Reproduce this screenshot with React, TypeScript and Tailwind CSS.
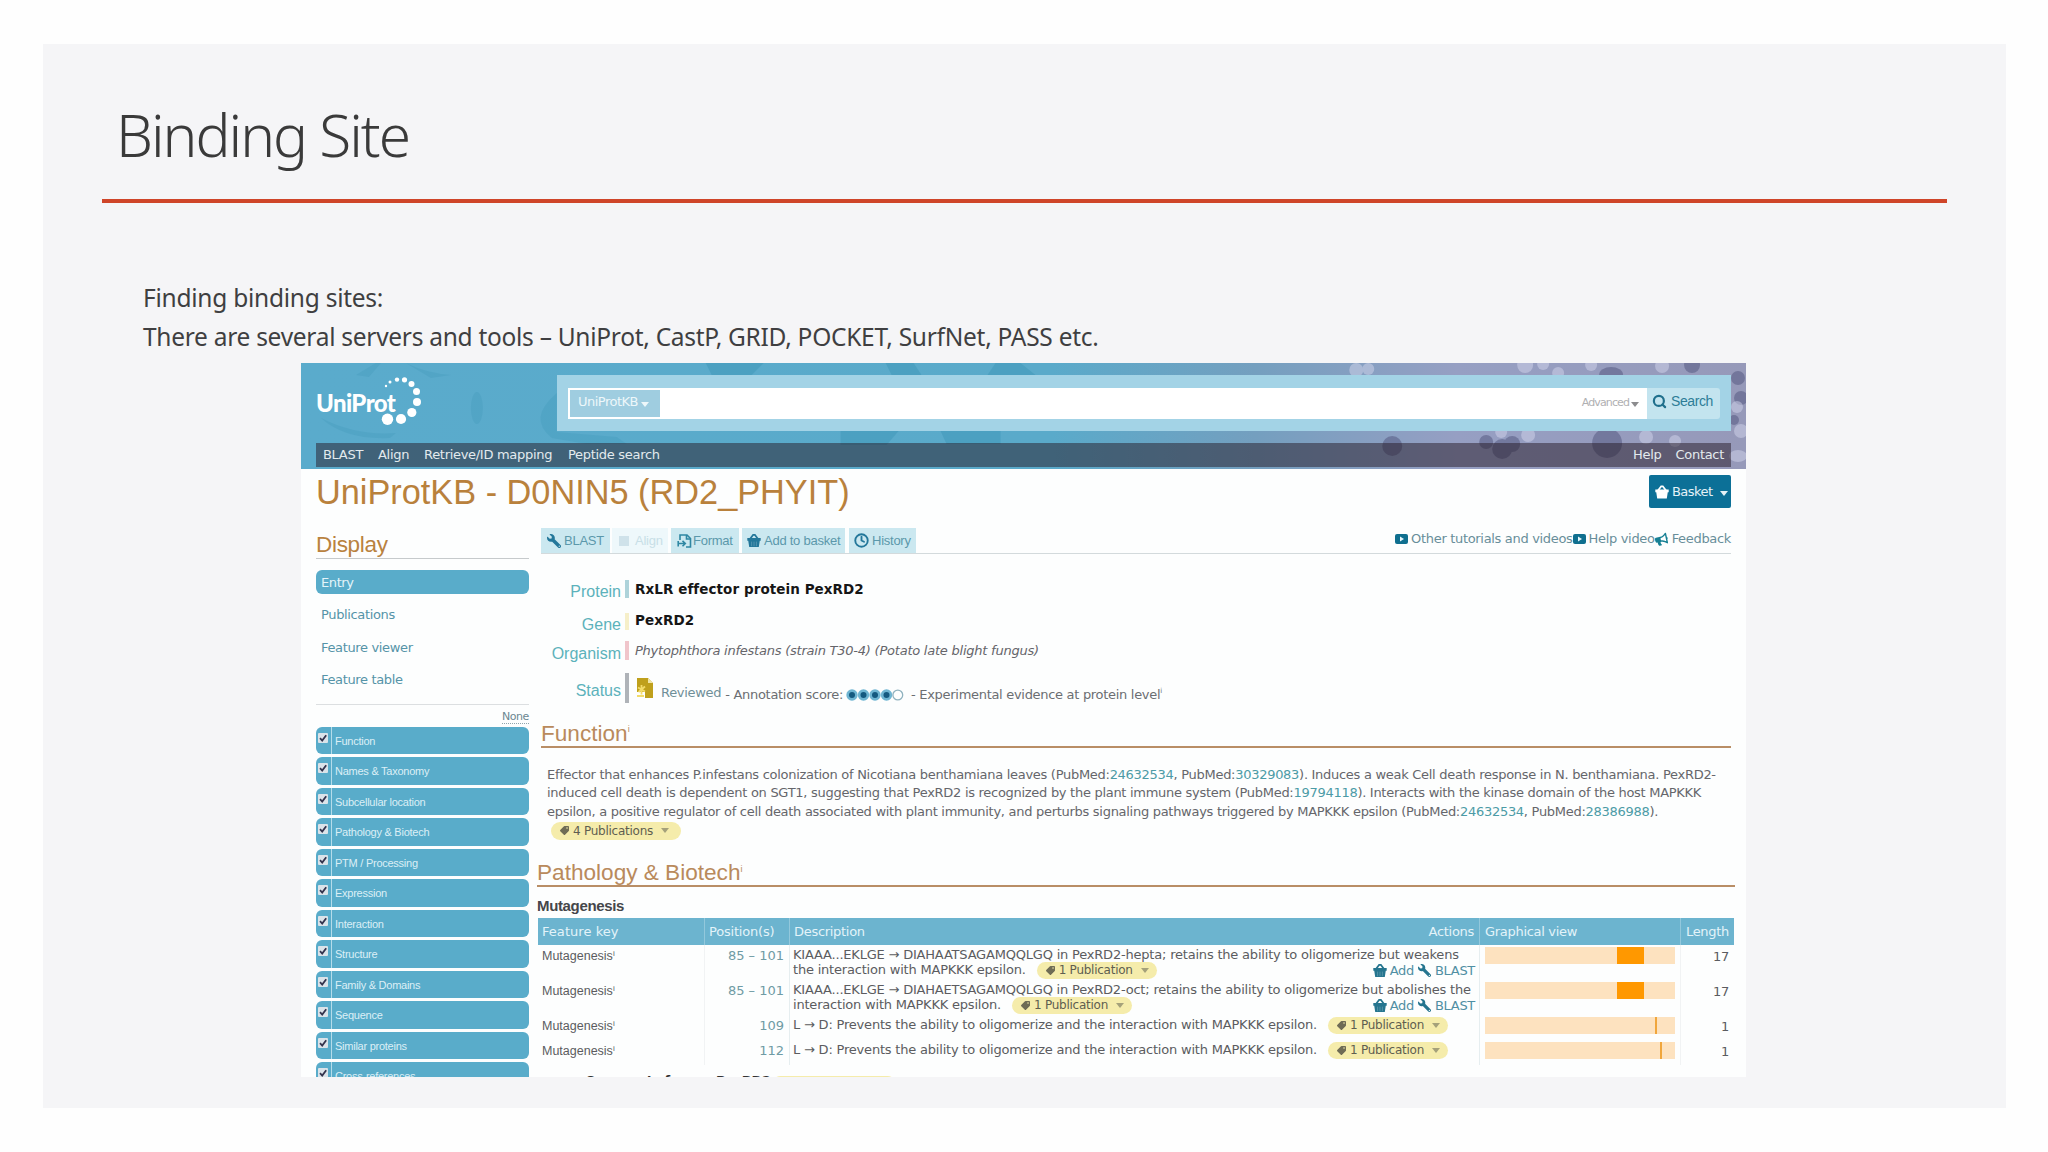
import React from "react";
import { Clock, Search } from "lucide-react";
import { FaBullhorn, FaTag, FaWrench } from "react-icons/fa";

interface Mutation {
  position: string;
  lines: string[];
  hasActions: boolean;
  length: number;
  // offset and width of the mark on the 190px track
  start: number;
  span: number;
}

const NAV_LINKS = [
  { label: "BLAST", className: "w-[55px]" },
  { label: "Align", className: "w-[46px]" },
  { label: "Retrieve/ID mapping", className: "w-[144px]" },
  { label: "Peptide search", className: "" },
];

const DISPLAY_LINKS = ["Publications", "Feature viewer", "Feature table"];

const SECTIONS = [
  "Function",
  "Names & Taxonomy",
  "Subcellular location",
  "Pathology & Biotech",
  "PTM / Processing",
  "Expression",
  "Interaction",
  "Structure",
  "Family & Domains",
  "Sequence",
  "Similar proteins",
  "Cross-references",
];

const MUTATIONS: Mutation[] = [
  {
    position: "85 – 101",
    lines: [
      "KIAAA...EKLGE → DIAHAATSAGAMQQLGQ in PexRD2-hepta; retains the ability to oligomerize but weakens",
      "the interaction with MAPKKK epsilon.",
    ],
    hasActions: true,
    length: 17,
    start: 132,
    span: 27,
  },
  {
    position: "85 – 101",
    lines: [
      "KIAAA...EKLGE → DIAHAETSAGAMQQLGQ in PexRD2-oct; retains the ability to oligomerize but abolishes the",
      "interaction with MAPKKK epsilon.",
    ],
    hasActions: true,
    length: 17,
    start: 132,
    span: 27,
  },
  {
    position: "109",
    lines: ["L → D: Prevents the ability to oligomerize and the interaction with MAPKKK epsilon."],
    hasActions: false,
    length: 1,
    start: 170,
    span: 2,
  },
  {
    position: "112",
    lines: ["L → D: Prevents the ability to oligomerize and the interaction with MAPKKK epsilon."],
    hasActions: false,
    length: 1,
    start: 175,
    span: 2,
  },
];

const LOGO_DOTS = [
  [70, 9, 1.2],
  [74, 5, 1.5],
  [81, 2.6, 2.2],
  [88.5, 2.8, 2.6],
  [95.5, 7, 3],
  [100.5, 14.5, 3.5],
  [101, 25, 4],
  [95.8, 35.5, 4.6],
  [85, 42, 5.1],
  [71.5, 42.3, 5.7],
];

const BasketIcon: React.FC<{ className?: string }> = ({ className }) => (
  <svg viewBox="0 0 14 13" className={className} fill="currentColor">
    <path d="M3 5 6.2.8h1.6L11 5" fill="none" stroke="currentColor" strokeWidth="1.8" />
    <path d="M.3 4h13.4v2.8H.3zM1.2 6.5h11.6L11.8 13H2.2z" />
    <path d="M4.6 7.6v4.6M7 7.6v4.6M9.4 7.6v4.6" stroke="white" strokeOpacity=".3" strokeWidth=".7" />
  </svg>
);

const FormatIcon = () => (
  <svg viewBox="0 0 15 14" className="h-[14px] w-[15px]" fill="none" stroke="#2f87a3" strokeWidth="1.6">
    <path d="M3 6V1h7l3.5 3.5V13H9" />
    <path d="M9.5 1v4h4M1 9.5h7M5.5 6.8 8.3 9.5l-2.8 2.8M1.2 7v5.5" />
  </svg>
);

const VideoIcon = () => (
  <svg viewBox="0 0 13 10" className="h-[10px] w-[13px] shrink-0">
    <rect width="13" height="10" rx="2" fill="#0f6f8f" />
    <path d="M5 2.6v4.8L9 5z" fill="#e6f6fb" />
  </svg>
);

const ReviewedIcon = () => (
  <svg viewBox="0 0 16 20" className="h-[20px] w-[16px]">
    <path d="M0 0h11l5 5v15H8V14H0z" fill="#bfa01c" />
    <path d="M11 0v5h5z" fill="#f1e5a5" />
    <path d="M4.5 7v9.5M1 9.5l7 4M8 8.5l-6.5 5.5M0 18h7" stroke="#f3dc6a" strokeWidth="1.8" />
  </svg>
);

const Caret: React.FC<{ className?: string }> = ({ className }) => (
  <svg viewBox="0 0 8 5" className={`h-[5px] w-[8px] ${className ?? ""}`} fill="currentColor">
    <path d="M0 0h8L4 5z" />
  </svg>
);

const PublicationPill: React.FC<{ label: string; className?: string }> = ({ label, className }) => (
  <span
    className={`flex items-center rounded-full bg-[#f5ecab] pl-[9px] text-[12px] tracking-[-0.25px] whitespace-nowrap text-[#5f5e50] ${className ?? ""}`}
  >
    <FaTag className="mr-[4px] size-[9px] rotate-90 text-[#6f6c55]" />
    {label}
    <Caret className="ml-[8px] text-[#a5a17a]" />
  </span>
);

const HeaderBackdrop = () => (
  <svg className="absolute inset-0 h-full w-full" viewBox="0 0 1446 106" preserveAspectRatio="none">
    <defs>
      <linearGradient id="sky" x1="0" x2="1" y1="0" y2="0">
        <stop offset="0" stopColor="#5aabcc" />
        <stop offset=".52" stopColor="#5aaaca" />
        <stop offset=".66" stopColor="#749fbf" />
        <stop offset=".8" stopColor="#969fc3" />
        <stop offset="1" stopColor="#9699b9" />
      </linearGradient>
    </defs>
    <rect width="1446" height="106" fill="url(#sky)" />
    <g fill="#2f8bad" opacity=".18">
      <path d="M20 55q35 18 75 15l-6 5q-45 2-69-20zM105 0q20 10 45 12l-20 3zM55 12 75 0h5L68 14z" />
      <ellipse cx="176" cy="45" rx="6" ry="16" />
      <path d="M256 30q-30 25-5 45l35 6 40 0-10-7-60-5z" />
    </g>
    <g fill="#2f8bad" opacity=".3">
      <path d="M405 0h58l-12 12h-40zM585 0h28l8 12h-30zM695 0h25l15 12h-48zM540 68h58l-12 14h-46zM640 68h60v13h-54z" />
    </g>
    <g fill="#575b83" opacity=".55">
      <circle cx="1092" cy="83" r="10" />
      <circle cx="1186" cy="79" r="7" />
      <circle cx="1202" cy="86" r="10" />
      <circle cx="1212" cy="81" r="8" />
      <circle cx="1307" cy="80" r="15" />
      <ellipse cx="1311" cy="12" rx="12" ry="8" />
      <circle cx="1392" cy="2" r="8" />
      <circle cx="1441" cy="35" r="7" />
      <circle cx="1434" cy="57" r="5" />
      <circle cx="1438" cy="15" r="7" />
    </g>
    <g fill="#d2d5ec" opacity=".5">
      <circle cx="1056" cy="7" r="7" />
      <circle cx="1068" cy="6" r="6" />
      <circle cx="1225" cy="2" r="8" />
      <circle cx="1243" cy="1" r="6" />
      <circle cx="1258" cy="10" r="6" />
      <circle cx="1291" cy="2" r="6" />
      <circle cx="1362" cy="3" r="7" />
      <circle cx="1201" cy="69" r="6" />
      <circle cx="1228" cy="72" r="7" />
      <circle cx="1346" cy="74" r="7" />
      <circle cx="1375" cy="78" r="6" />
      <circle cx="1437" cy="44" r="6" />
      <circle cx="1441" cy="68" r="7" />
      <ellipse cx="1438" cy="93" rx="9" ry="6" />
    </g>
  </svg>
);

const SiteHeader = () => (
  <header className="relative h-[106px] w-full">
    <HeaderBackdrop />
    <div className="relative flex h-[80px] pl-[15px]">
      <div className="relative mt-[13px] h-[54px] w-[241px]">
        <svg className="absolute top-0 left-0 h-[50px] w-[110px]" viewBox="0 0 110 50" fill="white">
          {LOGO_DOTS.map(([cx, cy, r], i) => (
            <circle key={i} cx={cx} cy={cy + 1} r={r} />
          ))}
        </svg>
        <span className="relative block pt-[14px] font-['Lato',sans-serif] text-[24px] leading-[26px] font-black tracking-[-0.6px] text-white">
          UniProt
        </span>
      </div>
      <div className="mt-[12px] flex h-[56px] w-[1174px] items-center bg-[#a3d3e6] pl-[11px]">
        <div className="flex h-[31px] w-[1079px] bg-white p-[2px] pr-0">
          <div className="flex w-[90px] items-center bg-[#9fcde0] pb-[2px] pl-[8px] text-[13px] tracking-[-0.5px] text-[#edf7fa]">
            UniProtKB
            <Caret className="mt-[5px] ml-[3px]" />
          </div>
          <div className="flex flex-1 items-center justify-end pr-[8px] text-[11px] tracking-[-0.9px] text-[#b0b0b2]">
            Advanced
            <Caret className="mt-[2px] ml-[2px] text-[#8c8c8e]" />
          </div>
        </div>
        <div className="flex h-[31px] w-[73px] items-center rounded-r-[3px] bg-[#c3e4ef] pb-[3px] pl-[5px] font-['Liberation_Sans',sans-serif] text-[14px] tracking-[-0.4px] text-[#2d7d97]">
          <Search className="mr-[4px] size-[15px] text-[#1f6f8c]" strokeWidth={3.5} />
          Search
        </div>
      </div>
    </div>
    <nav className="relative ml-[15px] flex h-[24px] w-[1415px] items-center bg-[#251a26]/50 pl-[7px] text-[13px] tracking-[-0.3px] text-[#e3eaee]">
      {NAV_LINKS.map((link) => (
        <span key={link.label} className={`whitespace-nowrap ${link.className}`}>
          {link.label}
        </span>
      ))}
      <span className="ml-auto">Help</span>
      <span className="mr-[7px] ml-[14px]">Contact</span>
    </nav>
  </header>
);

const Sidebar = () => (
  <aside className="w-[213px] shrink-0">
    <h2 className="border-b border-[#c6cacc] pt-[18px] font-['Liberation_Sans',sans-serif] text-[22.5px] leading-[26px] text-[#b9823f]">
      Display
    </h2>
    <div className="mt-[11px] h-[24px] rounded-[6px] bg-[#59acca] pl-[5px] leading-[26px] tracking-[-0.4px] text-[#e4f4f9]">
      Entry
    </div>
    <ul className="mt-[5px]">
      {DISPLAY_LINKS.map((label) => (
        <li key={label} className="h-[32.5px] pl-[5px] leading-[32.5px] tracking-[-0.35px] text-[#5594a8]">
          {label}
        </li>
      ))}
    </ul>
    <div className="mt-[7px] h-[23px] border-t border-[#dcdfe1] text-right text-[11px] leading-[23px] tracking-[-0.4px] text-[#6b8791]">
      <span className="border-b border-dotted border-[#8fa5ad]">None</span>
    </div>
    <ul className="space-y-[3px]">
      {SECTIONS.map((label) => (
        <li key={label} className="flex h-[27.5px] rounded-[6px] bg-[#59acca]">
          <span className="w-[16px] border-r border-[#b5dcea] pt-[6px] pl-[2px]">
            <svg viewBox="0 0 10 10" className="h-[10px] w-[10px]">
              <rect width="10" height="10" rx="1" fill="#dbe3e9" />
              <path d="M2 5.2 4.2 7.5 8.2 2.2" fill="none" stroke="#33334d" strokeWidth="1.8" />
            </svg>
          </span>
          <span className="pl-[3px] font-['Liberation_Sans',sans-serif] text-[11px] leading-[28px] tracking-[-0.25px] text-[#dceff6]">
            {label}
          </span>
        </li>
      ))}
    </ul>
  </aside>
);

const Toolbar = () => (
  <div className="ml-[4px] flex h-[26px] w-[1190px] border-b border-[#d3dadc] font-['Liberation_Sans',sans-serif] tracking-[-0.25px] text-[#5b98ab]">
    <span className="mr-[2px] flex w-[69px] items-center bg-[#cbe8f0] pl-[6px]">
      <FaWrench className="mr-[3px] size-[14px] -scale-x-100 text-[#23779a]" />
      BLAST
    </span>
    <span className="mr-[3px] flex w-[56px] items-center bg-[#eef8fb] pl-[7px] text-[#c8dfe7]">
      <span className="mr-[6px] size-[10px] bg-[#cfe2ea]" />
      Align
    </span>
    <span className="mr-[3px] flex w-[68px] items-center bg-[#cbe8f0] pl-[6px]">
      <FormatIcon />
      <span className="ml-[1px]">Format</span>
    </span>
    <span className="mr-[4px] flex w-[103px] items-center bg-[#cbe8f0] pl-[5px]">
      <BasketIcon className="mr-[3px] h-[13px] w-[14px] text-[#23779a]" />
      Add to basket
    </span>
    <span className="flex w-[67px] items-center bg-[#cbe8f0] pl-[5px]">
      <Clock className="mr-[3px] size-[15px] text-[#23779a]" strokeWidth={3} />
      History
    </span>
    <div className="ml-auto flex items-center pb-[3px] font-['DejaVu_Sans',sans-serif] tracking-[-0.32px] text-[#688e9a]">
      <VideoIcon />
      <span className="ml-[3px]">Other tutorials and videos</span>
      <VideoIcon />
      <span className="ml-[3px]">Help video</span>
      <FaBullhorn className="size-[13px] -rotate-12 text-[#178094]" />
      <span className="ml-[4px]">Feedback</span>
    </div>
  </div>
);

const InfoRow: React.FC<{
  label: string;
  className: string;
  barClassName: string;
  children: React.ReactNode;
}> = ({ label, className, barClassName, children }) => (
  <div className={`flex ${className}`}>
    <span className="flex w-[84px] items-center justify-end pt-[6px] font-['Liberation_Sans',sans-serif] text-[16px] tracking-normal text-[#5cb2bb]">
      {label}
    </span>
    <span className={`mr-[6px] ml-[4px] w-[4px] ${barClassName}`} />
    {children}
  </div>
);

const AnnotationScore = () => (
  <svg viewBox="0 0 58 12" className="mx-[3px] h-[12px] w-[58px]">
    {[6, 17.5, 29, 40.5].map((cx) => (
      <g key={cx}>
        <circle cx={cx} cy="6" r="5.7" fill="#6fb5d2" />
        <circle cx={cx} cy="6" r="3" fill="#155a80" />
      </g>
    ))}
    <circle cx="51.8" cy="6" r="4.9" fill="none" stroke="#8fb2bf" strokeWidth="1.3" />
  </svg>
);

const ProteinInfo = () => (
  <div className="mt-[26px]">
    <InfoRow label="Protein" className="h-[18px]" barClassName="bg-[#aed3da]">
      <b className="text-[13.5px] leading-[19px] tracking-[0.07px] text-[#161616]">RxLR effector protein PexRD2</b>
    </InfoRow>
    <InfoRow label="Gene" className="mt-[15px] h-[17px]" barClassName="bg-[#f6efc9]">
      <b className="text-[13.5px] leading-[15px] tracking-[0.07px] text-[#161616]">PexRD2</b>
    </InfoRow>
    <InfoRow label="Organism" className="mt-[11px] h-[19px]" barClassName="bg-[#f0c5cb]">
      <i className="leading-[20px] tracking-[-0.23px] text-[#65656a]">
        Phytophthora infestans (strain T30-4) (Potato late blight fungus)
      </i>
    </InfoRow>
    <InfoRow label="Status" className="mt-[13px] h-[30px]" barClassName="bg-[#afb3b8]">
      <div className="ml-[2px] pt-[5px]">
        <ReviewedIcon />
      </div>
      <span className="ml-[8px] pt-[10px] leading-[20px] text-[#6f8f98]">Reviewed</span>
      <span className="ml-[4px] flex items-center pt-[13px] text-[#6b6e72]">
        - Annotation score:
        <AnnotationScore />
        <span className="ml-[4px]">- Experimental evidence at protein level</span>
        <sup className="text-[7px]">i</sup>
      </span>
    </InfoRow>
  </div>
);

const PubMed: React.FC<{ id: string }> = ({ id }) => (
  <>
    PubMed:<span className="text-[#4c9ba6]">{id}</span>
  </>
);

const SectionTitle: React.FC<{ title: string; className: string }> = ({ title, className }) => (
  <h2
    className={`flex border-b-[2px] border-[#b98e66] font-['Liberation_Sans',sans-serif] text-[22.6px] tracking-normal text-[#b98a5c] ${className}`}
  >
    {title}
    <span className="-mt-[4px] text-[9px]">i</span>
  </h2>
);

const MutationRow: React.FC<{ mutation: Mutation }> = ({ mutation }) => (
  <div
    className={`grid grid-cols-[167px_85px_690px_201px_54px] text-[#5b5c60] ${
      mutation.hasActions ? "h-[35px]" : "h-[25px]"
    }`}
  >
    <div className="border-r border-[#f1f3f4] pl-[4px] font-['Liberation_Sans',sans-serif] text-[12.5px] leading-[22px] tracking-normal">
      Mutagenesis<sup className="text-[8px]">i</sup>
    </div>
    <div className="border-r border-[#e6eef0] pr-[5px] text-right leading-[22px] tracking-normal text-[#6f9ba4]">
      {mutation.position}
    </div>
    <div className="border-r border-[#e6eef0] pt-[2px] pr-[4px] pl-[3px] leading-[15px] tracking-[-0.2px]">
      {mutation.lines.map((line, i) => (
        <div key={line} className="flex h-[15px] items-center whitespace-nowrap">
          {line}
          {i === mutation.lines.length - 1 && (
            <PublicationPill label="1 Publication" className="mt-[3px] ml-[11px] h-[17px] w-[120px]" />
          )}
          {i === 1 && mutation.hasActions && (
            <span className="mt-[3px] ml-auto flex items-center tracking-[-0.3px] text-[#508fa3]">
              <BasketIcon className="mr-[3px] h-[13px] w-[14px] text-[#25758f]" />
              Add
              <FaWrench className="mx-[4px] size-[13px] -scale-x-100 text-[#25758f]" />
              BLAST
            </span>
          )}
        </div>
      ))}
    </div>
    <div className="border-r border-[#f1f3f4] pt-[2px] pl-[5px]">
      <div className="flex h-[17px] w-[190px] bg-[#fde2bf]">
        <div
          className={mutation.hasActions ? "bg-[#ff9800]" : "bg-[#f0a63c]"}
          style={{ marginLeft: mutation.start, width: mutation.span }}
        />
      </div>
    </div>
    <div className="pr-[6px] text-right leading-[23px]">{mutation.length}</div>
  </div>
);

const MutagenesisTable = () => (
  <div className="w-[1197px] pl-px">
    <div className="grid h-[27px] grid-cols-[167px_85px_690px_201px_53px] bg-[#6cb4cf] leading-[27px] text-[#e3f3f9]">
      <span className="border-r border-[#93c8dc] pl-[4px] tracking-[0.05px]">Feature key</span>
      <span className="border-r border-[#93c8dc] pl-[4px] tracking-[-0.2px]">Position(s)</span>
      <span className="flex justify-between border-r border-[#93c8dc] pr-[5px] pl-[4px]">
        <span>Description</span>
        <span>Actions</span>
      </span>
      <span className="border-r border-[#93c8dc] pl-[5px]">Graphical view</span>
      <span className="pr-[5px] text-right">Length</span>
    </div>
    {MUTATIONS.map((mutation) => (
      <MutationRow key={mutation.position + mutation.lines[0]} mutation={mutation} />
    ))}
  </div>
);

const EntryContent = () => (
  <main className="ml-[8px] w-[1198px] pt-[14px]">
    <Toolbar />
    <ProteinInfo />
    <SectionTitle title="Function" className="ml-[4px] w-[1190px] pt-[18px] leading-[25px]" />
    <p className="mt-[18px] mb-px ml-[10px] leading-[18.3px] tracking-[-0.285px] whitespace-nowrap text-[#65666b]">
      Effector that enhances P.infestans colonization of Nicotiana benthamiana leaves (<PubMed id="24632534" />,{" "}
      <PubMed id="30329083" />). Induces a weak Cell death response in N. benthamiana. PexRD2-
      <br />
      induced cell death is dependent on SGT1, suggesting that PexRD2 is recognized by the plant immune system (
      <PubMed id="19794118" />). Interacts with the kinase domain of the host MAPKKK
      <br />
      epsilon, a positive regulator of cell death associated with plant immunity, and perturbs signaling pathways
      triggered by MAPKKK epsilon (<PubMed id="24632534" />, <PubMed id="28386988" />).
    </p>
    <PublicationPill label="4 Publications" className="ml-[14px] h-[18px] w-[130px]" />
    <SectionTitle title="Pathology & Biotech" className="mt-[21px] leading-[24px]" />
    <h3 className="h-[31px] pt-[7px] font-['Liberation_Sans',sans-serif] text-[15px] leading-[24px] font-bold tracking-[-0.35px] text-[#45464a]">
      Mutagenesis
    </h3>
    <MutagenesisTable />
    <div className="mt-[6px] flex items-start pl-[48px] text-[13px] font-bold text-[#333]">
      <span className="w-[131px]">Comments for</span>
      <span className="w-[56px]">PexRD2</span>
      <span className="mt-[5px] h-[17px] w-[124px] rounded-full bg-[#f5ecab]" />
    </div>
  </main>
);

const UniProtEntry = () => (
  <section className="mt-[7px] ml-[258px] h-[714px] w-[1445px] overflow-hidden bg-[#fdfefe] font-['DejaVu_Sans',Verdana,sans-serif] text-[13px] tracking-[-0.3px]">
    <SiteHeader />
    <div className="flex h-[45px] items-center pr-[15px] pl-[15px]">
      <h1 className="font-['Liberation_Sans',sans-serif] text-[34.3px] leading-[44px] tracking-normal text-[#b9813c]">
        UniProtKB - D0NIN5 (RD2_PHYIT)
      </h1>
      <button className="ml-auto flex h-[33px] w-[82px] items-center rounded-[2px] bg-[#0c7097] pl-[6px] text-[13px] tracking-[-0.55px] text-[#e5f2f7]">
        <BasketIcon className="mr-[3px] h-[14px] w-[14px] text-white" />
        Basket
        <Caret className="mt-[4px] ml-[7px]" />
      </button>
    </div>
    <div className="flex pl-[15px]">
      <Sidebar />
      <EntryContent />
    </div>
  </section>
);

const App: React.FC = () => {
  return (
    <div className="h-[1152px] w-[2048px] overflow-hidden bg-[#fefefe] pt-[44px] pl-[43px]">
      <div className="h-[1064px] w-[1963px] bg-[#f5f5f7] font-['Noto_Sans',sans-serif]">
        <h1 className="h-[155px] pt-[50px] pl-[73px] text-[58.5px] leading-[80px] font-light tracking-[-2px] text-[#3a3a3a]">
          Binding Site
        </h1>
        <div className="mx-[59px] h-[4px] bg-[#cf4529]" />
        <div className="pt-[75px] pl-[100px] text-[24.5px] leading-[39px] text-[#3f3f41]">
          <p className="tracking-[-0.25px]">Finding binding sites:</p>
          <p className="tracking-[-0.28px]">
            There are several servers and tools – UniProt, CastP, GRID, POCKET, SurfNet, PASS etc.
          </p>
        </div>
        <UniProtEntry />
      </div>
    </div>
  );
};

export default App;
